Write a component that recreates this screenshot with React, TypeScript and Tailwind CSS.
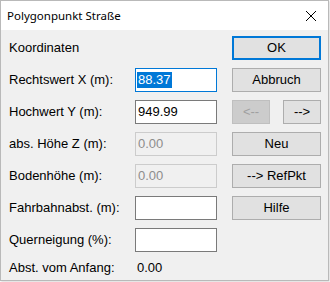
import { ReactNode } from "react";

const rows: { label: string; value: string; disabled?: boolean; focused?: boolean }[] = [
  { label: "Rechtswert X (m):", value: "88.37", focused: true },
  { label: "Hochwert Y (m):", value: "949.99" },
  { label: "abs. Höhe Z (m):", value: "0.00", disabled: true },
  { label: "Bodenhöhe (m):", value: "0.00", disabled: true },
  { label: "Fahrbahnabst. (m):", value: "" },
  { label: "Querneigung (%):", value: "" },
];

const Field = ({ value, disabled, focused }: { value: string; disabled?: boolean; focused?: boolean }) => {
  let cls = "border-[#7a7a7a] bg-white text-black";
  if (disabled) cls = "border-[#cccccc] bg-[#f0f0f0] text-[#8d8d8d]";
  if (focused) cls = "border-[#0078d7] bg-white text-black";
  return (
    <div className={`w-[82px] h-6 border flex items-center pl-[1px] ${cls}`}>
      {focused ? (
        <span className="bg-[#0078d7] text-white leading-4 px-[1px]">{value}</span>
      ) : (
        <span className="px-[1px]">{value}</span>
      )}
    </div>
  );
};

const Btn = ({ children, primary, disabled, className = "" }: { children: ReactNode; primary?: boolean; disabled?: boolean; className?: string }) => {
  let cls = "border border-[#adadad] bg-[#e1e1e1] text-black";
  if (primary) cls = "border-2 border-[#0078d7] bg-[#e1e1e1] text-black";
  if (disabled) cls = "border border-[#bfbfbf] bg-[#cccccc] text-[#a0a0a0]";
  return (
    <div className={`h-6 flex items-center justify-center ${cls} ${className}`}>{children}</div>
  );
};

export default function App() {
  return (
    <div className="w-[330px] h-[282px] bg-white">
      <div
        className="w-[329px] h-[281px] border border-[#b9b9b9] bg-[#f0f0f0] flex flex-col shadow-[1px_1px_2px_rgba(0,0,0,0.15)]"
        style={{ fontFamily: '"Liberation Sans", Arial, sans-serif' }}
      >
        {/* title bar */}
        <div className="h-[29px] bg-white flex items-center justify-between pl-[6px] pr-[10px]">
          <span className="text-[11.5px] text-black" style={{ fontFamily: '"Noto Sans", "Open Sans", sans-serif' }}>
            Polygonpunkt Straße
          </span>
          <svg width="12" height="12" viewBox="0 0 12 12" className="mr-[1px]">
            <path d="M1 1 L11 11 M11 1 L1 11" stroke="#000" strokeWidth="1" fill="none" />
          </svg>
        </div>

        <div className="flex pt-[6px] text-[13px] text-black">
          <div className="pl-[8px] w-[231px] flex flex-col gap-2">
            <div className="h-6 flex items-center">Koordinaten</div>
            {rows.map((r) => (
              <div key={r.label} className="h-6 flex items-center">
                <div className="w-[126px]">{r.label}</div>
                <Field value={r.value} disabled={r.disabled} focused={r.focused} />
              </div>
            ))}
            <div className="h-4 flex items-center">
              <div className="w-[128px]">Abst. vom Anfang:</div>
              <div>0.00</div>
            </div>
          </div>

          <div className="w-[89px] flex flex-col gap-2">
            <Btn primary>OK</Btn>
            <Btn>Abbruch</Btn>
            <div className="flex justify-between">
              <Btn disabled className="w-[38px]">&lt;--</Btn>
              <Btn className="w-[38px]">--&gt;</Btn>
            </div>
            <Btn>Neu</Btn>
            <Btn>--&gt; RefPkt</Btn>
            <Btn>Hilfe</Btn>
          </div>
        </div>
      </div>
    </div>
  );
}
